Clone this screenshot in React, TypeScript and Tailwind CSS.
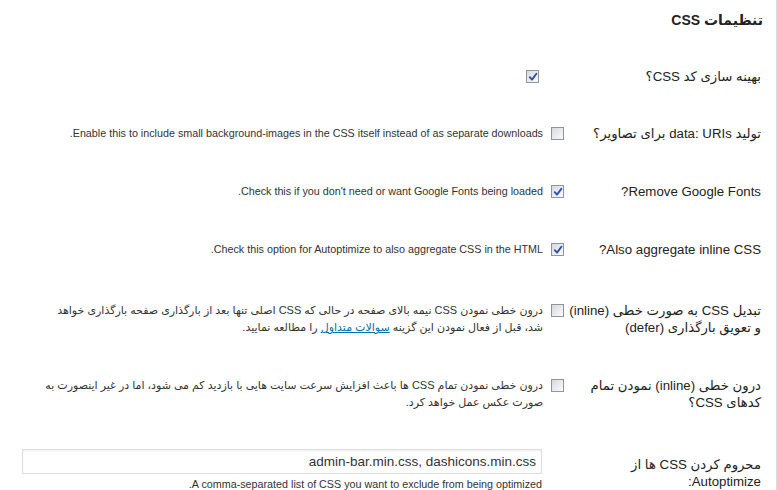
import React from 'react';

const FONT = { fontFamily: '"Liberation Sans", "DejaVu Sans", sans-serif' };

function Checkbox({ checked, className = '' }: { checked?: boolean; className?: string }) {
  return (
    <span
      className={`relative inline-block h-[13px] w-[13px] shrink-0 border border-[#8f959c] bg-linear-to-br from-[#d6d9df] to-[#fbfbfc] ${className}`}
    >
      {checked && (
        <svg viewBox="0 0 10 10" className="absolute left-[1px] top-[1px] h-[10px] w-[10px]">
          <path d="M1.8 5.2 L4 7.6 L8.4 1.8" fill="none" stroke="#2a4fb0" strokeWidth="1.9" strokeLinecap="round" strokeLinejoin="round" />
        </svg>
      )}
    </span>
  );
}

function Row({
  label,
  children,
  className = '',
}: {
  label: React.ReactNode;
  children?: React.ReactNode;
  className?: string;
}) {
  return (
    <div className={`flex ${className}`}>
      <div className="w-[212px] shrink-0 whitespace-nowrap pr-[15px] text-[13.25px] leading-[17px] text-[#222]">{label}</div>
      <div className="flex min-w-0 flex-1">{children}</div>
    </div>
  );
}

function Desc({ children, fa }: { children: React.ReactNode; fa?: boolean }) {
  return (
    <p className={`mr-[8px] whitespace-nowrap leading-[17px] text-[#333] ${fa ? 'text-[11px]' : 'text-[10.75px]'}`}>
      {children}
    </p>
  );
}

export default function App() {
  return (
    <div dir="rtl" className="h-[490px] w-[777px] overflow-hidden bg-white" style={FONT}>
      <div className="h-[490px] w-[776px] border-r border-[#dcdcdc]">
        <h3 className="pr-[13px] pt-[10px] text-[14px] font-bold leading-[20px] text-[#222]">تنظیمات CSS</h3>

        <Row label="بهینه سازی کد CSS؟" className="mt-[38px] items-center">
          <Checkbox checked className="mr-[25px]" />
        </Row>

        <Row label="تولید data: URIs برای تصاویر؟" className="mt-[40px] items-center">
          <div className="flex items-center">
            <Checkbox />
            <Desc>Enable this to include small background-images in the CSS itself instead of as separate downloads.</Desc>
          </div>
        </Row>

        <Row label="Remove Google Fonts?" className="mt-[41px] items-center">
          <div className="flex items-center">
            <Checkbox checked />
            <Desc>Check this if you don't need or want Google Fonts being loaded.</Desc>
          </div>
        </Row>

        <Row label="Also aggregate inline CSS?" className="mt-[41px] items-center">
          <div className="flex items-center">
            <Checkbox checked />
            <Desc>Check this option for Autoptimize to also aggregate CSS in the HTML.</Desc>
          </div>
        </Row>

        <Row
          label={
            <>
              تبدیل CSS به صورت خطی (inline)
              <br />
              و تعویق بارگذاری (defer)
            </>
          }
          className="mt-[44px] items-start"
        >
          <div className="flex items-start">
            <Checkbox className="mt-[2px]" />
            <Desc fa>
              درون خطی نمودن CSS نیمه بالای صفحه در حالی که CSS اصلی تنها بعد از بارگذاری صفحه بارگذاری خواهد
              <br />
              شد، قبل از فعال نمودن این گزینه{' '}
              <a href="#" className="text-[#0073aa] underline">
                سوالات متداول
              </a>{' '}
              را مطالعه نمایید.
            </Desc>
          </div>
        </Row>

        <Row
          label={
            <>
              درون خطی (inline) نمودن تمام
              <br />
              کدهای CSS؟
            </>
          }
          className="mt-[41px] items-start"
        >
          <div className="flex items-start">
            <Checkbox className="mt-[2px]" />
            <Desc fa>
              درون خطی نمودن تمام CSS ها باعث افزایش سرعت سایت هایی با بازدید کم می شود، اما در غیر اینصورت به
              <br />
              صورت عکس عمل خواهد کرد.
            </Desc>
          </div>
        </Row>

        <Row
          label={
            <>
              محروم کردن CSS ها از
              <br />
              Autoptimize:
            </>
          }
          className="mt-[45px] items-start"
        >
          <div className="mr-[22px] -mt-[7px] w-[520px]">
            <input
              type="text"
              defaultValue="admin-bar.min.css, dashicons.min.css"
              className="block h-[25px] w-[520px] border border-[#dddddd] bg-white px-[5px] text-[13.5px] text-[#333] shadow-[inset_0_1px_2px_rgba(0,0,0,0.07)] outline-none"
              style={FONT}
            />
            <p className="mt-[3px] text-[10.75px] leading-[14px] text-[#333]">
              A comma-separated list of CSS you want to exclude from being optimized.
            </p>
          </div>
        </Row>
      </div>
    </div>
  );
}
